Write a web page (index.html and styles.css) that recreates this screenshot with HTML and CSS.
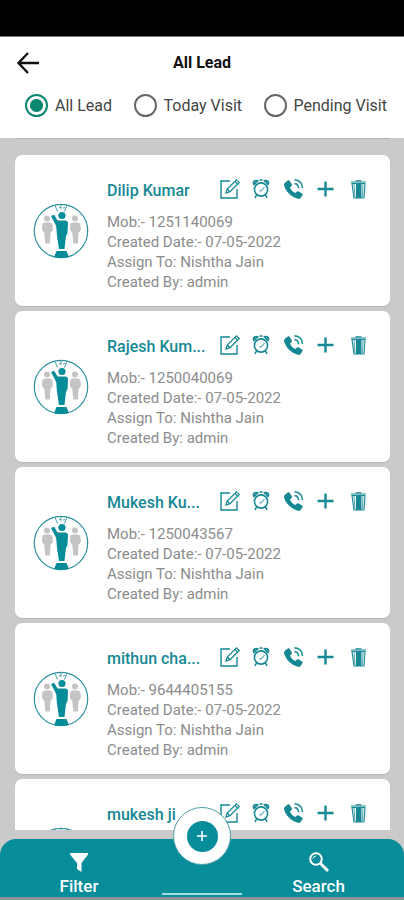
FILE: index.html
```html
<!DOCTYPE html>
<html lang="en">
<head>
<meta charset="utf-8">
<meta name="viewport" content="width=device-width, initial-scale=1">
<title>All Lead</title>
<link rel="stylesheet" href="styles.css">
</head>
<body>
<svg class="sprite" aria-hidden="true">
  <symbol id="edit" viewBox="0 0 22 22">
    <path d="M11 3H2v17h16v-9" fill="none" stroke="currentColor" stroke-width="1.400"/>
    <path d="M7 15l1.200-4L17.500 1.800l2.700 2.600L11 13.700z M16 3.500l2.600 2.600M8.500 11.200l2.400 2.400" fill="none" stroke="currentColor" stroke-width="1.300"/>
  </symbol>
  <symbol id="alarm" viewBox="0 0 22 22">
    <g fill="none" stroke="currentColor" stroke-width="1.600">
      <circle cx="10" cy="11.500" r="6.600"/>
      <path d="M3 6.500C1.500 4 3.500 1.800 6.500 2.800zM17 6.500C18.500 4 16.500 1.800 13.500 2.800zM5.500 17l-1.500 3M14.500 17l1.500 3M8.500 2h3"/>
      <path d="M8.500 12.800l1.500.2L13.500 9" stroke-width="1"/>
    </g>
  </symbol>
  <symbol id="call" viewBox="0 0 22 22">
    <path d="M2.200 4.500L4.800 2.600c.8-.5 1.500-.3 2 .5l1.900 3.200c.4.800.3 1.300-.3 1.900L7 9.600c1 2.400 2.800 4.200 5.200 5.400l1.700-1.400c.6-.5 1.200-.5 1.900-.1l3.200 2.100c.8.600.9 1.300.3 2L17.600 20c-1 1-2.200 1-3.600.5C7.500 18.200 3.200 13.800 1.200 8c-.4-1.400-.1-2.600 1-3.500z" fill="currentColor"/>
    <path d="M11.500 5.500c2.500.3 4 2 4.200 4.800M11.500 1.800c4.800.3 7.600 3.200 8 8.200" fill="none" stroke="currentColor" stroke-width="1.500"/>
  </symbol>
  <symbol id="plus" viewBox="0 0 22 22">
    <path d="M10.500 3.500v15M2.500 11h16" stroke="currentColor" stroke-width="2.400"/>
  </symbol>
  <symbol id="trash" viewBox="0 0 22 22">
    <path d="M4 4h15M8.500 2.800h6M5 5.500h13L17 20H7z" fill="none" stroke="currentColor" stroke-width="1.100"/>
    <path d="M9 5.500h5.500V20H9z" fill="currentColor"/>
    <path d="M7 6l1 13M16 6l-.5 13" stroke="currentColor" stroke-width=".8"/>
  </symbol>
  <symbol id="leader" viewBox="0 0 56 56">
    <circle cx="28" cy="28" r="26.700" fill="none" stroke="#2f929c" stroke-width="1.200"/>
    <g id="follower" fill="#c4c4c4">
      <circle cx="14" cy="15.500" r="3"/>
      <path d="M11.500 19.500h5c1.800 0 2.800 1 3 2.600l.4 4.900-2.400 3-.6 10.500h-4.600l-1-10.500L9 27l.2-4.900c0-1.600.9-2.600 2.300-2.600z"/>
    </g>
    <use href="#follower" x="28"/>
    <path d="M22 2.500l2.500 6M28 2v3.500M34 2.500l-2.500 6M26 4.500l2 .5M32 4.500l-2 .5" stroke="#2f929c" stroke-width=".9"/>
    <g fill="#078c9a">
      <circle cx="29" cy="12.500" r="3.600"/>
      <path d="M18 13l3.200-1.200 3.300 5.700h7.500c2 0 3 1 3 3l-.5 9.500-1.500 3L31.500 46h-5.500l-2-13-.8-10z"/>
      <path d="M23.500 48h10l2.500 6c-4.500 1.300-10.500 1.300-15 0z"/>
    </g>
  </symbol>
</svg>

<div class="statusbar"></div>
<header class="header">
  <div class="titlebar">
    <button class="back" type="button" aria-label="Back">
      <svg viewBox="0 0 24 24"><path d="M12 2L2.500 12 12 22M2.500 12H23" fill="none" stroke="currentColor" stroke-width="2.400"/></svg>
    </button>
    <h1>All Lead</h1>
  </div>
  <form class="tabs">
    <label><input type="radio" name="view" checked><span>All Lead</span></label>
    <label><input type="radio" name="view"><span>Today Visit</span></label>
    <label><input type="radio" name="view"><span>Pending Visit</span></label>
  </form>
</header>

<main class="leads">
  <article class="card">
    <svg class="avatar" aria-hidden="true"><use href="#leader"/></svg>
    <div class="body">
      <div class="top">
        <h2>Dilip Kumar</h2>
        <div class="actions">
          <button type="button" aria-label="Edit"><svg><use href="#edit"/></svg></button>
          <button type="button" aria-label="Reminder"><svg><use href="#alarm"/></svg></button>
          <button type="button" aria-label="Call"><svg><use href="#call"/></svg></button>
          <button type="button" aria-label="Add"><svg><use href="#plus"/></svg></button>
          <button type="button" aria-label="Delete"><svg><use href="#trash"/></svg></button>
        </div>
      </div>
      <p>Mob:- 1251140069</p>
      <p>Created Date:- 07-05-2022</p>
      <p>Assign To: Nishtha Jain</p>
      <p>Created By: admin</p>
    </div>
  </article>
  <article class="card">
    <svg class="avatar" aria-hidden="true"><use href="#leader"/></svg>
    <div class="body">
      <div class="top">
        <h2>Rajesh Kum...</h2>
        <div class="actions">
          <button type="button" aria-label="Edit"><svg><use href="#edit"/></svg></button>
          <button type="button" aria-label="Reminder"><svg><use href="#alarm"/></svg></button>
          <button type="button" aria-label="Call"><svg><use href="#call"/></svg></button>
          <button type="button" aria-label="Add"><svg><use href="#plus"/></svg></button>
          <button type="button" aria-label="Delete"><svg><use href="#trash"/></svg></button>
        </div>
      </div>
      <p>Mob:- 1250040069</p>
      <p>Created Date:- 07-05-2022</p>
      <p>Assign To: Nishtha Jain</p>
      <p>Created By: admin</p>
    </div>
  </article>
  <article class="card">
    <svg class="avatar" aria-hidden="true"><use href="#leader"/></svg>
    <div class="body">
      <div class="top">
        <h2>Mukesh Ku...</h2>
        <div class="actions">
          <button type="button" aria-label="Edit"><svg><use href="#edit"/></svg></button>
          <button type="button" aria-label="Reminder"><svg><use href="#alarm"/></svg></button>
          <button type="button" aria-label="Call"><svg><use href="#call"/></svg></button>
          <button type="button" aria-label="Add"><svg><use href="#plus"/></svg></button>
          <button type="button" aria-label="Delete"><svg><use href="#trash"/></svg></button>
        </div>
      </div>
      <p>Mob:- 1250043567</p>
      <p>Created Date:- 07-05-2022</p>
      <p>Assign To: Nishtha Jain</p>
      <p>Created By: admin</p>
    </div>
  </article>
  <article class="card">
    <svg class="avatar" aria-hidden="true"><use href="#leader"/></svg>
    <div class="body">
      <div class="top">
        <h2>mithun cha...</h2>
        <div class="actions">
          <button type="button" aria-label="Edit"><svg><use href="#edit"/></svg></button>
          <button type="button" aria-label="Reminder"><svg><use href="#alarm"/></svg></button>
          <button type="button" aria-label="Call"><svg><use href="#call"/></svg></button>
          <button type="button" aria-label="Add"><svg><use href="#plus"/></svg></button>
          <button type="button" aria-label="Delete"><svg><use href="#trash"/></svg></button>
        </div>
      </div>
      <p>Mob:- 9644405155</p>
      <p>Created Date:- 07-05-2022</p>
      <p>Assign To: Nishtha Jain</p>
      <p>Created By: admin</p>
    </div>
  </article>
  <article class="card">
    <svg class="avatar" aria-hidden="true"><use href="#leader"/></svg>
    <div class="body">
      <div class="top">
        <h2>mukesh ji</h2>
        <div class="actions">
          <button type="button" aria-label="Edit"><svg><use href="#edit"/></svg></button>
          <button type="button" aria-label="Reminder"><svg><use href="#alarm"/></svg></button>
          <button type="button" aria-label="Call"><svg><use href="#call"/></svg></button>
          <button type="button" aria-label="Add"><svg><use href="#plus"/></svg></button>
          <button type="button" aria-label="Delete"><svg><use href="#trash"/></svg></button>
        </div>
      </div>
    </div>
  </article>
</main>

<nav class="bottombar">
  <button class="item" type="button">
    <svg viewBox="0 0 22 22"><path d="M2 2h18v1.500L13.500 12v9L9 18v-6L2 3.500z" fill="currentColor"/></svg>
    <span>Filter</span>
  </button>
  <button class="item" type="button">
    <svg viewBox="0 0 22 22"><circle cx="8" cy="8" r="5.800" fill="none" stroke="currentColor" stroke-width="2"/><path d="M5 7.500A3 3 0 0 1 8 5" fill="none" stroke="currentColor"/><path d="M12.500 12.500l7.500 7.500" stroke="currentColor" stroke-width="3"/></svg>
    <span>Search</span>
  </button>
  <button class="fab" type="button" aria-label="Add lead">
    <span><svg viewBox="0 0 10 10"><path d="M5 0v10M0 5h10" stroke="currentColor" stroke-width="1.600"/></svg></span>
  </button>
  <div class="handle"></div>
</nav>
</body>
</html>
```
FILE: styles.css
```css
* { box-sizing: border-box; }

body {
  margin: 0;
  height: 100vh;
  display: flex;
  flex-direction: column;
  overflow: hidden;
  background: #cacaca;
  font-family: Roboto, "Liberation Sans", sans-serif;
}

button {
  padding: 0;
  border: 0;
  background: none;
  color: inherit;
  font: inherit;
}

h1, h2, p { margin: 0; }

.sprite {
  position: absolute;
  width: 0;
  height: 0;
}

.statusbar {
  flex: none;
  height: 36px;
  background: #000;
  border-bottom: 1px solid #777;
  box-sizing: content-box;
}

.header {
  flex: none;
  background: #fff;
  padding-bottom: 15px;
}

.titlebar {
  display: grid;
  grid-template-columns: 32px 1fr 32px;
  align-items: center;
  height: 51px;
  padding: 0 16px;
}

.back {
  display: flex;
  color: #111;
}

.back svg {
  width: 24px;
  height: 24px;
}

h1 {
  font-size: 16px;
  font-weight: 700;
  text-align: center;
  color: #111;
}

.tabs {
  display: flex;
  justify-content: space-between;
  height: 35px;
  padding: 0 17px 0 25px;
  font-size: 16px;
  color: #444;
}

.tabs label {
  display: flex;
  align-items: center;
  gap: 7px;
}

.tabs input {
  appearance: none;
  width: 23px;
  height: 23px;
  margin: 0;
  border: 2px solid #666;
  border-radius: 50%;
}

.tabs input:checked {
  border-color: #0a8671;
  background: radial-gradient(circle, #0a8671 0 6px, #fff 7px);
}

.leads {
  flex: 1;
  min-height: 0;
  overflow: hidden;
  display: flex;
  flex-direction: column;
  gap: 5px;
  margin: 0 14px 9px 15px;
  padding-top: 16px;
  border-top: 1px solid #b2b2b2;
}

.card {
  flex: none;
  display: flex;
  min-height: 151px;
  padding: 22px 21px 12px 18px;
  border-radius: 7px;
  background: #fff;
  box-shadow: 0 1px 1px #b4b4b4;
}

.avatar {
  flex: none;
  width: 56px;
  height: 56px;
  margin: 26px 18px 0 0;
}

.body { flex: 1; }

.top {
  display: flex;
  justify-content: space-between;
  height: 35px;
  color: #168894;
}

h2 {
  font-size: 16px;
  font-weight: 500;
  line-height: 28px;
  white-space: nowrap;
}

.actions {
  display: flex;
  gap: 10px;
}

.actions button {
  display: flex;
  height: 24px;
  align-items: center;
}

.actions svg {
  width: 22px;
  height: 22px;
}

p {
  font-size: 15px;
  line-height: 20px;
  color: #8c8c8c;
}

.bottombar {
  flex: none;
  position: relative;
  display: grid;
  grid-template-columns: 158px 1fr 171px;
  padding: 12px 0 1px;
  border-bottom: 3px solid #8f9399;
  border-radius: 16px 16px 0 0;
  background: #078c9a;
  color: #fff;
}

.item {
  display: flex;
  flex-direction: column;
  align-items: center;
  gap: 3px;
  font-size: 17px;
  font-weight: 500;
  line-height: 20px;
}

.item + .item { grid-column: 3; }

.item svg {
  width: 22px;
  height: 22px;
}

.fab {
  position: absolute;
  top: -32px;
  left: 50%;
  margin-left: -29px;
  width: 58px;
  height: 58px;
  display: flex;
  align-items: center;
  justify-content: center;
  border: 1px solid #4a9fa8;
  border-radius: 50%;
  background: #fff;
}

.fab span {
  display: flex;
  align-items: center;
  justify-content: center;
  width: 31px;
  height: 31px;
  border-radius: 50%;
  background: #078c9a;
}

.fab svg {
  width: 10px;
  height: 10px;
}

.handle {
  position: absolute;
  bottom: 2px;
  left: 40%;
  width: 20%;
  height: 2px;
  background: #a5dbe0;
}
```
